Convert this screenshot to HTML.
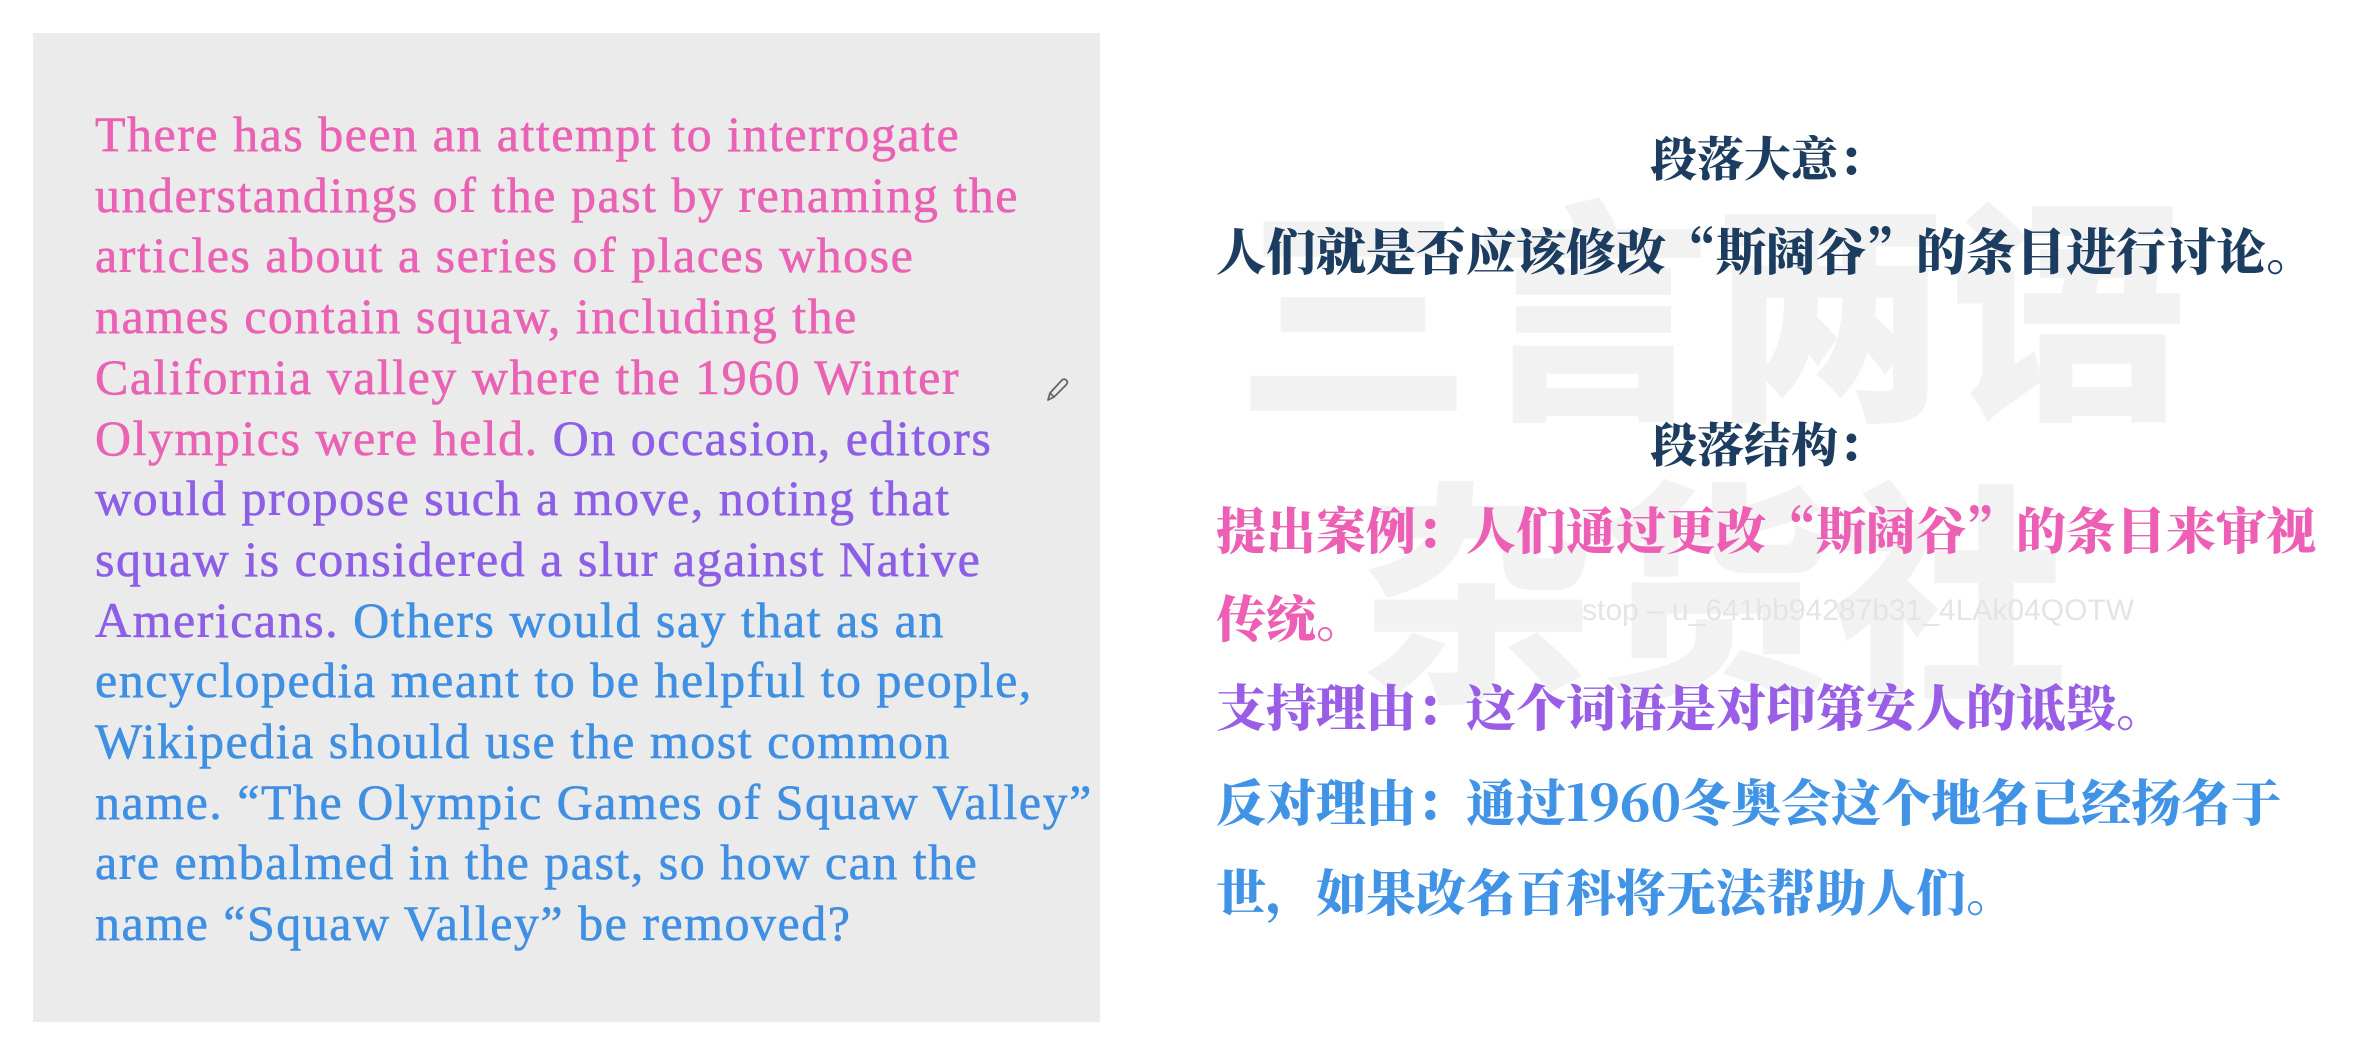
<!DOCTYPE html>
<html><head><meta charset="utf-8"><style>
html,body{margin:0;padding:0;width:2366px;height:1042px;background:#fff;overflow:hidden;position:relative}
.panel{position:absolute;left:33px;top:33px;width:1067px;height:989px;background:#ebebeb}
.en{position:absolute;left:95px;top:104px;font-family:"Liberation Serif",serif;font-size:50px;line-height:60.7px;letter-spacing:1.5px;white-space:nowrap;-webkit-text-stroke:0.6px currentColor}
.p{color:#ea62b4}.v{color:#8d5ee6}.b{color:#3f8fe3}
.wm{position:absolute;font-family:"Noto Sans CJK SC",sans-serif;font-weight:900;color:#f2f2f2;white-space:nowrap;line-height:1}
.cn{position:absolute;font-family:"Noto Serif CJK SC",serif;font-weight:900;font-size:50px;white-space:nowrap;line-height:1}
</style></head><body>
<div class="panel"></div>
<div class="en">
<div class="p">There has been an attempt to interrogate</div>
<div class="p">understandings of the past by renaming the</div>
<div class="p">articles about a series of places whose</div>
<div class="p">names contain squaw, including the</div>
<div class="p">California valley where the 1960 Winter</div>
<div><span class="p">Olympics were held.</span> <span class="v">On occasion, editors</span></div>
<div class="v">would propose such a move, noting that</div>
<div class="v">squaw is considered a slur against Native</div>
<div><span class="v">Americans.</span> <span class="b">Others would say that as an</span></div>
<div class="b">encyclopedia meant to be helpful to people,</div>
<div class="b">Wikipedia should use the most common</div>
<div class="b">name. “The Olympic Games of Squaw Valley”</div>
<div class="b">are embalmed in the past, so how can the</div>
<div class="b">name “Squaw Valley” be removed?</div>
</div>
<svg style="position:absolute;left:1044px;top:376px" width="26" height="28" viewBox="0 0 26 28"><path d="M4 24 L6 17 L18 4 Q21 2 23 5 Q24 7 22 9 L10 21 Z M6 17 L10 21" fill="none" stroke="#666" stroke-width="1.8" stroke-linejoin="round"/></svg>
<div class="wm" style="left:1236px;top:180px;font-size:236px;letter-spacing:2px">三言两语</div>
<div class="wm" style="left:1360px;top:462px;font-size:236px">杂货社</div>
<div class="cn" style="left:1650px;top:133px;color:#1c3d60;font-size:47px">段落大意：</div>
<div class="cn" style="left:1216px;top:224px;color:#1c3d60">人们就是否应该修改“斯阔谷”的条目进行讨论。</div>
<div class="cn" style="left:1650px;top:419px;color:#1c3d60;font-size:47px">段落结构：</div>
<div class="cn" style="left:1216px;top:503px;color:#ec5fb4">提出案例：人们通过更改“斯阔谷”的条目来审视</div>
<div class="cn" style="left:1216px;top:591px;color:#ec5fb4">传统。</div>
<div style="position:absolute;left:1582px;top:594px;font-family:'Liberation Sans',sans-serif;font-size:30px;color:#e4e4e4;white-space:nowrap">stop – u_641bb94287b31_4LAk04QOTW</div>
<div class="cn" style="left:1216px;top:680px;color:#9a5ee6">支持理由：这个词语是对印第安人的诋毁。</div>
<div class="cn" style="left:1216px;top:775px;color:#4193e6">反对理由：通过1960冬奥会这个地名已经扬名于</div>
<div class="cn" style="left:1216px;top:865px;color:#4193e6">世，如果改名百科将无法帮助人们。</div>
</body></html>
